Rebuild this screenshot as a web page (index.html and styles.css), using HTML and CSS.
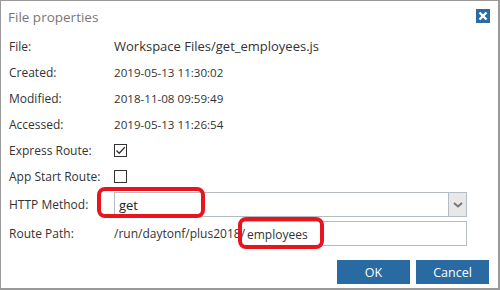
FILE: index.html
```html
<html>
<head>
<title>File properties</title>
<link rel="stylesheet" href="styles.css">
</head>
<body>
<div class="dialog">
    <div class="titleBar">
        <span class="titleText">File properties</span>
        <span class="closeBox">
            <svg width="14" height="14" viewBox="0 0 14 14"><path d="M3.5 3.5 L10.5 10.5 M10.5 3.5 L3.5 10.5" stroke="white" stroke-width="2.4"/></svg>
        </span>
    </div>
    <div class="form">
        <div class="row"><span class="label">File:</span><span class="value pathValue">Workspace Files/get_employees.js</span></div>
        <div class="row"><span class="label">Created:</span><span class="value">2019-05-13 11:30:02</span></div>
        <div class="row"><span class="label">Modified:</span><span class="value">2018-11-08 09:59:49</span></div>
        <div class="row"><span class="label">Accessed:</span><span class="value">2019-05-13 11:26:54</span></div>
        <div class="row"><span class="label">Express Route:</span>
            <span class="check"><svg width="11" height="11" viewBox="0 0 11 11"><path d="M1.5 5.5 L4.2 8.3 L9.8 2.3" fill="none" stroke="#333" stroke-width="1.3"/></svg></span></div>
        <div class="row"><span class="label">App Start Route:</span><span class="check"></span></div>
        <div class="row selectRow"><span class="label">HTTP Method:</span>
            <div class="select"><span class="selectText">get</span>
                <span class="selectButton"><svg width="10" height="6" viewBox="0 0 10 6"><path d="M1 1 L5 4.5 L9 1" fill="none" stroke="#777" stroke-width="2"/></svg></span>
            </div>
        </div>
        <div class="row inputRow"><span class="label">Route Path:</span>
            <span class="prefix">/run/daytonf/plus2018/</span>
            <div class="input">employees</div>
        </div>
    </div>
    <div class="buttons">
        <button type="button" class="btn">OK</button>
        <button type="button" class="btn">Cancel</button>
    </div>
    <div class="mark markGet"></div>
    <div class="mark markPath"></div>
</div>
</body>
</html>
```
FILE: styles.css
```css
body {
    margin: 0;
    font-family: "Open Sans", "Noto Sans", sans-serif;
    font-size: 12px;
    color: #333;}
.dialog {
    position: relative;
    box-sizing: border-box;
    width: 500px;
    height: 290px;
    border: 1px solid #999;
    border-right-width: 2px;
    border-bottom-width: 2px;
    background: white;}
.titleBar {
    display: flex;
    justify-content: space-between;
    align-items: center;
    height: 32px;
    padding: 0 8px 0 7px;}
.titleText {
    font-size: 13.5px;
    color: #777;}
.closeBox {
    display: flex;
    width: 14px;
    height: 14px;
    margin-top: -3px;
    background: #2c6aa3;}
.form {
    display: flex;
    flex-direction: column;
    padding-left: 8px;}
.row {
    display: flex;
    align-items: center;
    height: 26px;}
.label {width: 105px; font-size: 12px;}
.value {font-size: 11.6px;}
.pathValue {font-size: 13px;}
.check {
    display: flex;
    align-items: center;
    justify-content: center;
    box-sizing: border-box;
    width: 13px;
    height: 13px;
    border: 1px solid #333;}
.selectRow {height: 25px; margin-top: 3px;}
.select {
    display: flex;
    box-sizing: border-box;
    width: 353px;
    height: 25px;
    border: 1px solid #b5bcc4;}
.selectText {
    flex: 1;
    padding: 3px 0 0 4px;
    font-size: 13px;
    color: #222;}
.selectButton {
    display: flex;
    align-items: center;
    justify-content: center;
    width: 17px;
    background: #e8e8e8;
    border-left: 1px solid #b5bcc4;}
.inputRow {height: 25px; margin-top: 4px;}
.prefix {width: 127px;}
.input {
    box-sizing: border-box;
    width: 226px;
    height: 25px;
    padding: 4px 0 0 5px;
    font-size: 12px;
    border: 1px solid #b5bcc4;}
.buttons {
    display: flex;
    justify-content: flex-end;
    gap: 6px;
    padding: 14px 9px 0 0;}
.btn {
    width: 73px;
    height: 24px;
    border: none;
    background: #2a6aa2;
    color: white;
    font-family: "Open Sans", "Noto Sans", sans-serif;
    font-size: 12.5px;}
.mark {
    position: absolute;
    box-sizing: border-box;
    border: 4px solid #e8141e;
    border-radius: 8px;}
.markGet {left: 96px; top: 186px; width: 108px; height: 31px;}
.markPath {left: 237px; top: 216px; width: 86px; height: 32px;}
```
